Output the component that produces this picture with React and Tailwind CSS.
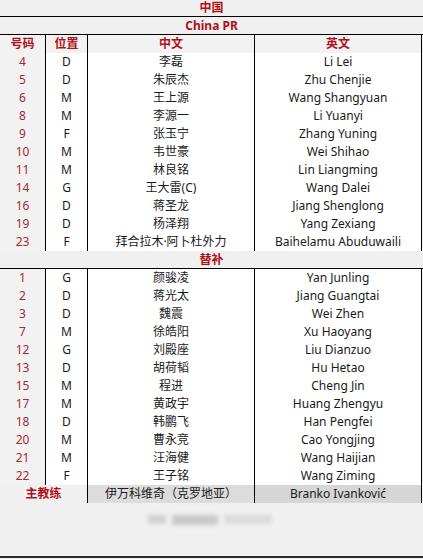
import React from "react";

const starters = [
  ["4", "D", "李磊", "Li Lei"],
  ["5", "D", "朱辰杰", "Zhu Chenjie"],
  ["6", "M", "王上源", "Wang Shangyuan"],
  ["8", "M", "李源一", "Li Yuanyi"],
  ["9", "F", "张玉宁", "Zhang Yuning"],
  ["10", "M", "韦世豪", "Wei Shihao"],
  ["11", "M", "林良铭", "Lin Liangming"],
  ["14", "G", "王大雷(C)", "Wang Dalei"],
  ["16", "D", "蒋圣龙", "Jiang Shenglong"],
  ["19", "D", "杨泽翔", "Yang Zexiang"],
  ["23", "F", "拜合拉木·阿卜杜外力", "Baihelamu Abuduwaili"],
];

const subs = [
  ["1", "G", "颜骏凌", "Yan Junling"],
  ["2", "D", "蒋光太", "Jiang Guangtai"],
  ["3", "D", "魏震", "Wei Zhen"],
  ["7", "M", "徐皓阳", "Xu Haoyang"],
  ["12", "G", "刘殿座", "Liu Dianzuo"],
  ["13", "D", "胡荷韬", "Hu Hetao"],
  ["15", "M", "程进", "Cheng Jin"],
  ["17", "M", "黄政宇", "Huang Zhengyu"],
  ["18", "D", "韩鹏飞", "Han Pengfei"],
  ["20", "M", "曹永竞", "Cao Yongjing"],
  ["21", "M", "汪海健", "Wang Haijian"],
  ["22", "F", "王子铭", "Wang Ziming"],
];

const font = { fontFamily: '"Noto Sans", "Noto Sans CJK SC", sans-serif' };

function Row({ r }) {
  return (
    <div className="grid grid-cols-[46px_42px_167px_167px] h-[18px] text-[12px] leading-[18px] overflow-hidden">
      <div className="border-b border-r border-black bg-[#f2f2f2] text-center text-[#a8282f]">{r[0]}</div>
      <div className="border-b border-r border-black bg-white text-center text-[#1a1a1a]">{r[1]}</div>
      <div className="border-b border-r border-black bg-white text-center text-[#1a1a1a]">{r[2]}</div>
      <div className="border-b border-r border-black bg-white text-center text-[#1a1a1a]">{r[3]}</div>
    </div>
  );
}

function Title({ children }) {
  return (
    <div className="h-[18px] border-b border-black bg-[#f0f0f0] text-center text-[12px] leading-[18px] font-bold text-[#b0101a] overflow-hidden">
      {children}
    </div>
  );
}

export default function App() {
  return (
    <div className="w-[423px] h-[559px] bg-[#f0f0f0] flex flex-col" style={font}>
      <div className="border-t border-[#d8d8d8] h-[18px] -mb-px"></div>
      <div className="-mt-[18px]">
        <Title>中国</Title>
        <Title>China PR</Title>
        <div className="grid grid-cols-[46px_42px_167px_167px] h-[18px] text-[12px] leading-[18px] font-bold text-[#b0101a] overflow-hidden">
          <div className="border-b border-r border-black bg-[#f2f2f2] text-center">号码</div>
          <div className="border-b border-r border-black bg-[#f2f2f2] text-center">位置</div>
          <div className="border-b border-r border-black bg-[#f2f2f2] text-center">中文</div>
          <div className="border-b border-r border-black bg-[#f2f2f2] text-center">英文</div>
        </div>
        {starters.map((r) => (
          <Row key={r[0]} r={r} />
        ))}
        <Title>替补</Title>
        {subs.map((r) => (
          <Row key={r[0]} r={r} />
        ))}
        <div className="grid grid-cols-[88px_167px_167px] h-[18px] text-[12px] leading-[18px] overflow-hidden">
          <div className="border-b border-r border-black bg-[#f0f0f0] text-center font-bold text-[#b0101a]">主教练</div>
          <div className="border-b border-r border-black bg-[#dcdcdc] text-center text-[#1a1a1a]">伊万科维奇（克罗地亚）</div>
          <div className="border-b border-r border-black bg-[#d6d6d6] text-center text-[#1a1a1a]">Branko Ivanković</div>
        </div>
      </div>
      <div className="flex-1 flex items-start justify-center pt-[12px]">
        <div className="flex gap-[6px] blur-[2px] opacity-70 ml-[-4px]">
          <div className="w-[18px] h-[9px] bg-[#c4c4c4]"></div>
          <div className="w-[46px] h-[10px] bg-[#b8b8b8]"></div>
          <div className="w-[48px] h-[9px] bg-[#d2d2d2]"></div>
        </div>
      </div>
      <div className="h-[2px] bg-[#2a2a2a] mb-px"></div>
    </div>
  );
}
